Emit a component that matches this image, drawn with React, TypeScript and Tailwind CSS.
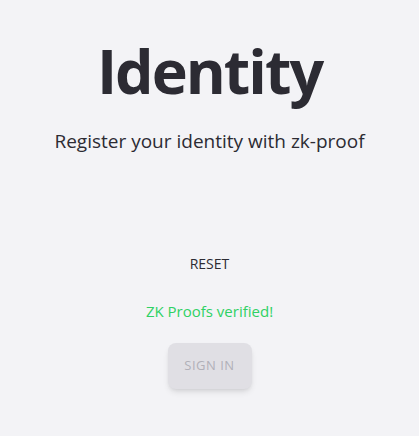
import React from "react";

const App = () => {
  return (
    <div
      className="flex min-h-[436px] flex-col items-center bg-[#f3f3f6] text-[#2c2b33]"
      style={{ fontFamily: '"Open Sans", "Noto Sans", sans-serif' }}
    >
      <h1 className="mt-[31px] text-[61px] font-bold leading-[80px] tracking-[-2px]">Identity</h1>
      <p className="mt-[17px] text-[19px] leading-[26px]">Register your identity with zk-proof</p>
      <button className="mt-[100px] text-[14px] leading-[20px] text-[#2c2b33]">RESET</button>
      <div className="mt-[27px] text-[15px] leading-[20px] text-[#2fd164]">ZK Proofs verified!</div>
      <button
        disabled
        className="mt-[22px] h-[46px] w-[84px] rounded-lg bg-[#e0dfe4] text-[13px] tracking-[0.5px] text-[#b1b0b8] shadow-md"
      >
        SIGN IN
      </button>
    </div>
  );
};

export default App;
